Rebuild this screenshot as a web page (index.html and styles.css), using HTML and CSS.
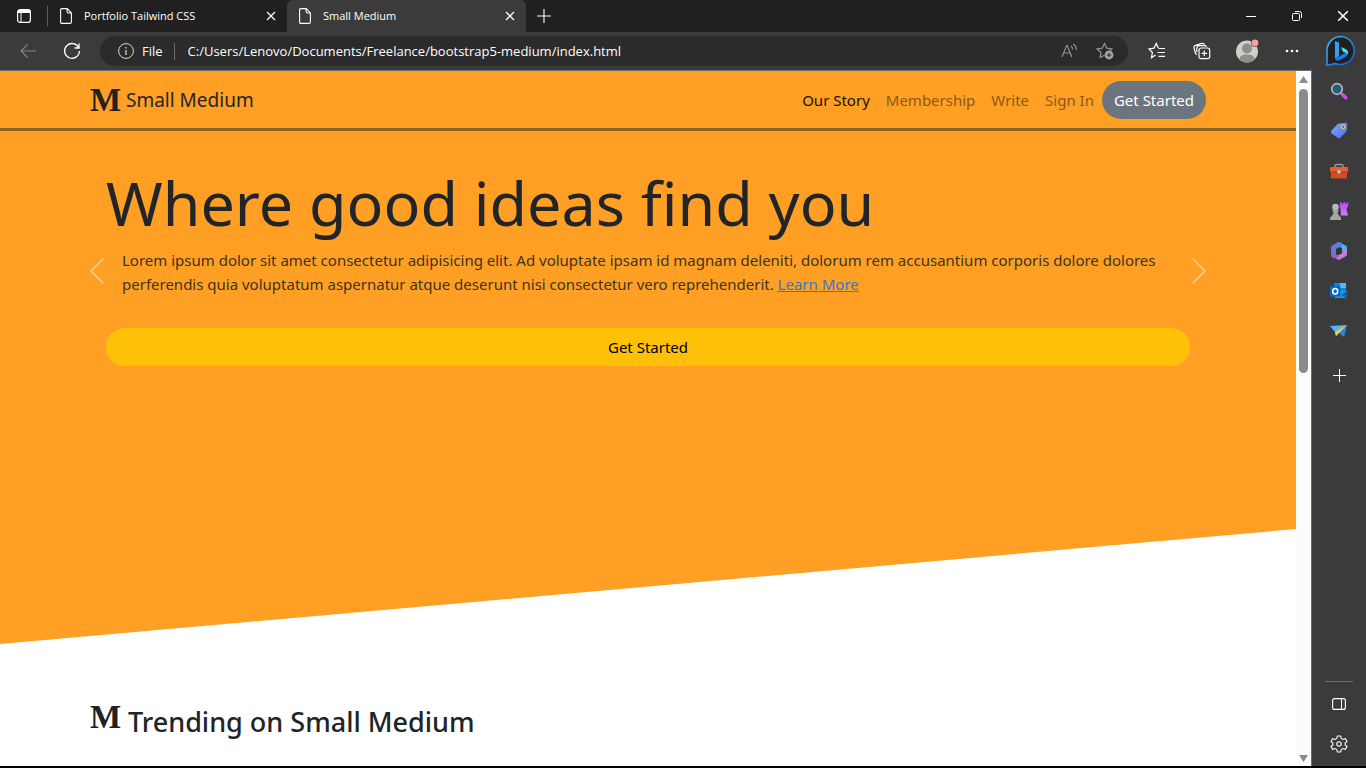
FILE: index.html
```html
<!DOCTYPE html>
<html lang="en">
<head>
<meta charset="utf-8">
<title>Small Medium</title>
<link rel="stylesheet" href="styles.css">
</head>
<body>
<svg class="defs" aria-hidden="true">
  <defs>
    <linearGradient id="bing-blue" x1="0" y1="0" x2="1" y2="1"><stop offset="0" stop-color="#2fc6f5"/><stop offset="1" stop-color="#1b4fd0"/></linearGradient>
    <linearGradient id="tag-blue" x1="0" y1="0" x2="1" y2="1"><stop offset="0" stop-color="#82aaff"/><stop offset="1" stop-color="#4a6cf0"/></linearGradient>
    <linearGradient id="rook" x1="0" y1="0" x2="0" y2="1"><stop offset="0" stop-color="#b04bf5"/><stop offset="1" stop-color="#d77df2"/></linearGradient>
    <symbol id="page" viewBox="0 0 12 16"><path d="M2 .6h5.200l4.200 4.300v9.100q0 1.400-1.400 1.400H2Q.6 15.400.6 14V2Q.6.6 2 .6M7.100.8v3q0 1.200 1.200 1.200h3" fill="none" stroke="currentColor" stroke-width="1.1"/></symbol>
    <symbol id="cross" viewBox="0 0 10 10"><path d="M1 1l8 8M9 1l-8 8" fill="none" stroke="currentColor" stroke-width="1.3"/></symbol>
    <symbol id="plus" viewBox="0 0 14 14"><path d="M7 0v14M0 7h14" fill="none" stroke="currentColor" stroke-width="1.1"/></symbol>
  </defs>
</svg>
<div class="browser">
  <header class="tabbar">
    <button class="tabmenu" aria-label="Tab actions"><svg width="14" height="14" viewBox="0 0 14 14"><rect x=".6" y=".6" width="12.800" height="12.800" rx="2.500" fill="none" stroke="#fff" stroke-width="1.200"/><path d="M1 1h12v3H1z" fill="#fff"/><path d="M4 4v9" stroke="#fff"/></svg></button>
    <div class="divider"></div>
    <div class="tab">
      <svg class="page-icon"><use href="#page"/></svg><span class="tab-title">Portfolio Tailwind CSS</span>
      <button class="tab-close" aria-label="Close tab"><svg width="10" height="10"><use href="#cross"/></svg></button>
    </div>
    <div class="tab tab-active">
      <svg class="page-icon"><use href="#page"/></svg><span class="tab-title">Small Medium</span>
      <button class="tab-close" aria-label="Close tab"><svg width="10" height="10"><use href="#cross"/></svg></button>
    </div>
    <button class="newtab" aria-label="New tab"><svg width="14" height="14"><use href="#plus"/></svg></button>
    <div class="window-controls">
      <button aria-label="Minimize"><svg width="10" height="10"><path d="M0 5.500h10" stroke="#fff"/></svg></button>
      <button aria-label="Restore"><svg width="10" height="10" viewBox="0 0 10 10" fill="none" stroke="#fff"><rect x=".5" y="2.500" width="7" height="7" rx="1"/><path d="M3 .5h4.500q2 0 2 2V7"/></svg></button>
      <button aria-label="Close"><svg width="12" height="12"><use href="#cross"/></svg></button>
    </div>
  </header>

  <div class="toolbar">
    <button class="tool back" aria-label="Back"><svg width="17" height="14" fill="none" stroke="#858585" stroke-width="1.100"><path d="M16 7H1M7.500.5L1 7l6.500 6.500"/></svg></button>
    <button class="tool reload" aria-label="Reload"><svg width="18" height="18" viewBox="0 0 18 18" fill="none" stroke="#fff" stroke-width="1.300"><path d="M15.800 6A7.400 7.400 0 1 0 16.400 9M16 1.500V6h-4.500"/></svg></button>
    <div class="address">
      <svg width="16" height="16" viewBox="0 0 16 16" fill="none" stroke="#d5d5d5"><circle cx="8" cy="8" r="7.400"/><path d="M8 7v5M8 4v1.500" stroke-width="1.300"/></svg>
      <label class="scheme" for="url">File</label>
      <input id="url" type="text" value="C:/Users/Lenovo/Documents/Freelance/bootstrap5-medium/index.html">
      <button class="addr-tool" aria-label="Read aloud"><svg width="17" height="16" viewBox="0 0 17 16" fill="none" stroke="#969696" stroke-width="1.100"><path d="M1 14L5.600 2.500h.6L10.800 14M2.600 10h6.600M10 3q1.600 1.300 1.600 3.500M12.300 1q3 2.200 3 6"/></svg></button>
      <button class="addr-tool" aria-label="Add to favorites"><svg width="18" height="18" viewBox="0 0 18 18"><path d="M8.500 13.200l-4.300 2.300.8-5L1.200 7l5-.8L8.500 1.500l2.300 4.700 5 .8-1.400 1.500" fill="none" stroke="#969696" stroke-width="1.200"/><circle cx="13" cy="13" r="4.400" fill="#a8a8a8"/><path d="M13 10.700v4.600M10.700 13h4.600" stroke="#2b2b2b" stroke-width="1.200"/></svg></button>
    </div>
    <button class="tool" aria-label="Favorites"><svg width="18" height="18" viewBox="0 0 18 18" fill="none" stroke="#fff" stroke-width="1.200"><path d="M7.500 13l-4 2.800.9-5.300L1 7l5-.8L8.200 1.500l2.200 4.600M10.500 6.500h6.500M9.500 10.500H17M10.500 14.300H17"/></svg></button>
    <button class="tool" aria-label="Collections"><svg width="18" height="18" viewBox="0 0 18 18" fill="none" stroke="#fff" stroke-width="1.200"><rect x="6" y="6" width="10.700" height="10.700" rx="2.200"/><path d="M11.300 8.500v5.700M8.500 11.300h5.700M4 12.500q-1.400-.4-1.800-2L1 5.600q-.3-1.800 1.400-2.300L9 1.400q2-.4 2.500 1.300M3.800 10V6.300q0-2.600 2.600-2.600h5.300q1.400 0 2 .8"/></svg></button>
    <button class="tool" aria-label="Profile"><svg width="24" height="24" viewBox="0 0 24 24"><circle cx="12" cy="12.500" r="11" fill="#d1cec9"/><circle cx="12" cy="9.500" r="5" fill="#918e89"/><path d="M4.500 20q0-4.500 7.500-4.500t7.500 4.500q-3 3.500-7.500 3.500T4.500 20" fill="#918e89"/><circle cx="20" cy="4" r="4" fill="#3b3b3b"/><circle cx="20" cy="4" r="3.400" fill="#ff9c9c"/></svg></button>
    <button class="tool" aria-label="More"><svg width="14" height="4" fill="#fff"><circle cx="2" cy="2" r="1.300"/><circle cx="7" cy="2" r="1.300"/><circle cx="12" cy="2" r="1.300"/></svg></button>
    <button class="tool bing" aria-label="Bing"><svg width="32" height="32" viewBox="0 0 32 32"><path d="M16.500 1.500a14 14 0 1 1-5.500 27q-3 1.500-8.500 1.500 1-3 .5-8v-7A14 14 0 0 1 16.500 1.500z" fill="#202020" stroke="url(#bing-blue)" stroke-width="1.600"/><path d="M11 6l4 1.500v13.300l-4 3.200z" fill="#2fa0f5"/><path d="M11 23.500l3-1.500 6-3.600 4-1.400q.5 3-2.500 5L15 25.500q-3 1-4-2z" fill="#2474ec"/><path d="M17 12l5 2.300q2.500 1.500 2 5-1.500-1.500-5-2.500z" fill="#42e3ee"/></svg></button>
  </div>

  <div class="workspace">
    <main class="viewport">
      <nav class="site-nav">
        <div class="container nav-row">
          <a class="brand" href="#"><span class="logo">M</span>Small Medium</a>
          <div class="nav-links">
            <a class="nav-link current" href="#">Our Story</a>
            <a class="nav-link" href="#">Membership</a>
            <a class="nav-link" href="#">Write</a>
            <a class="nav-link" href="#">Sign In</a>
            <button class="pill pill-gray">Get Started</button>
          </div>
        </div>
      </nav>
      <section class="hero">
        <div class="container slide">
          <button class="arrow" aria-label="Previous"><svg width="16" height="28" fill="none" stroke="#ffce8f" stroke-width="1.700" stroke-linecap="round"><path d="M13 2L1 14l12 12"/></svg></button>
          <div class="slide-body">
            <h1>Where good ideas find you</h1>
            <p>Lorem ipsum dolor sit amet consectetur adipisicing elit. Ad voluptate ipsam id magnam deleniti, dolorum rem accusantium corporis dolore dolores perferendis quia voluptatum aspernatur atque deserunt nisi consectetur vero reprehenderit. <a href="#">Learn More</a></p>
            <button class="pill pill-yellow">Get Started</button>
          </div>
          <button class="arrow" aria-label="Next"><svg width="16" height="28" fill="none" stroke="#ffce8f" stroke-width="1.700" stroke-linecap="round"><path d="M3 2l12 12L3 26"/></svg></button>
        </div>
      </section>
      <section class="container trending">
        <span class="logo">M</span><h2>Trending on Small Medium</h2>
      </section>
    </main>
    <div class="scrollbar" aria-hidden="true">
      <svg width="9" height="7" fill="#8b8b8b"><path d="M4.500 0L9 7H0z"/></svg>
      <div class="track"><div class="thumb"></div></div>
      <svg width="9" height="7" fill="#8b8b8b"><path d="M4.500 7L9 0H0z"/></svg>
    </div>
    <aside class="sidebar">
      <button aria-label="Search"><svg width="18" height="18" viewBox="0 0 18 18"><path d="M10.500 10.500l2 2" stroke="#aaa" stroke-width="2"/><path d="M12.500 12.500l3.300 3.300" stroke="#cc4cf5" stroke-width="3.400" stroke-linecap="round"/><circle cx="7" cy="7" r="5.300" fill="#235d7c" stroke="#b5b5b5" stroke-width="1.700"/></svg></button>
      <button aria-label="Shopping"><svg width="18" height="18" viewBox="0 0 18 18"><path d="M9 1.500l6.500-.7q1.500 0 1.500 1.400V8q0 1-.8 1.800l-6 6q-1.300 1.200-2.500 0L1.600 11.500Q.4 10 1.400 8.800L7 2.700q.8-1 2-1.200z" fill="url(#tag-blue)"/><circle cx="13" cy="4.800" r="1.700" fill="#455" stroke="#f5d21f" stroke-width="1.300"/></svg></button>
      <button aria-label="Tools"><svg width="20" height="16" viewBox="0 0 20 16"><path d="M6 5V3q0-1.500 1.500-1.500h5Q14 1.500 14 3v2" fill="none" stroke="#999" stroke-width="1.500"/><rect x="1" y="4" width="18" height="6" rx="1" fill="#ed5b33"/><path d="M2 9h16v5.500q0 1-1 1H3q-1 0-1-1z" fill="#d94a24"/><path d="M1 9h18" stroke="#a8341a"/><circle cx="10" cy="8.800" r="1.800" fill="#c8c8c8"/></svg></button>
      <button aria-label="Games"><svg width="20" height="20" viewBox="0 0 20 20"><path d="M11 1.500h2v1.200h1.200V1.300h2v1.400h1.200V1.500h2L18.700 6l-1.200 1 .8 5.500q1 .8.700 2h-7L11.500 7 10.700 6z" fill="url(#rook)"/><circle cx="6.500" cy="6" r="3.300" fill="#b8b8b8"/><path d="M3.500 9h6v1.600L8.500 11q0 2.500 2 4l1.500 1.700v2.300H1v-2.300L2.700 15q2-1.500 1.800-4l-1-.4z" fill="#a5a5a5"/></svg></button>
      <button aria-label="Microsoft 365"><svg width="18" height="20" viewBox="0 0 18 20"><path d="M9 1l7 3.700q1 .7 1 2V12l-5-2.500V7L6 4z" fill="#45b4ef"/><path d="M17 8v5q0 1.500-1.300 2.200L10 18.500q-1.200.6-2.400 0L4 16l8-3.500V9.800z" fill="#bb83d3"/><path d="M9.500 1q1.500 0 2.500 1v3L6 8v5.500L8 15l-4 2.500-2-1.500q-1-.7-1-2V6.500q0-1.200 1-2L7.500 1.200z" fill="#627bd3"/><path d="M1 11q2 3.500 5 2.500l3 2-4 2-3-1.500q-1-1-1-2z" fill="#9b5bbb"/><path d="M9 6.500l3 1.700v3.600l-3 1.700-3-1.700V8.200z" fill="#343434"/></svg></button>
      <button aria-label="Outlook"><svg width="18" height="18" viewBox="0 0 18 18"><path d="M4 1h12v9H4z" fill="#1681d1"/><path d="M10 1h6v5h-6z" fill="#45c4f1"/><path d="M5 8l12 1v7H5z" fill="#1a9de4"/><path d="M17 9l-6 4 6 3.500z" fill="#0b64aa"/><rect x="0" y="4" width="10.500" height="10.500" rx="1" fill="#0969bd"/><ellipse cx="5.200" cy="9.200" rx="2.500" ry="2.800" fill="none" stroke="#fff" stroke-width="1.500"/></svg></button>
      <button aria-label="Drop"><svg width="18" height="16" viewBox="0 0 18 16"><path d="M0 3l17-1L5 9z" fill="#4eb8f4"/><path d="M17 2L5 9l1 4z" fill="#f9b51f"/><path d="M17 2L9 10l5 4z" fill="#2785ed"/><path d="M5 9l12-7L9 10l-3 3z" fill="#ffc93c"/></svg></button>
      <button class="add" aria-label="Customize"><svg width="13" height="13"><use href="#plus"/></svg></button>
      <div class="sidebar-end">
        <button aria-label="Hide sidebar"><svg width="14" height="12" fill="none" stroke="#fff" stroke-width="1.100"><rect x=".6" y=".6" width="12.800" height="10.800" rx="2"/><path d="M9.500 1v10"/></svg></button>
        <button aria-label="Settings"><svg width="18" height="18" viewBox="0 0 18 18" fill="none" stroke="#fff" stroke-width="1.100" stroke-linejoin="round"><path d="M7.300 1h3.400l.5 2.400 1.700 1 2.400-.8L17 6.600l-1.900 1.600v1.700l1.900 1.600-1.700 2.900-2.400-.8-1.700 1-.5 2.400H7.300l-.5-2.400-1.700-1-2.400.8L1 11.500l1.900-1.600V8.200L1 6.600l1.700-3 2.400.8 1.700-1z"/><circle cx="9" cy="9" r="2.200"/></svg></button>
      </div>
    </aside>
  </div>
</div>
</body>
</html>
```

FILE: styles.css
```css
* { box-sizing: border-box; }
body { margin: 0; font-family: "Noto Sans", "Open Sans", sans-serif; font-size: 15px; line-height: 24px; color: #212529; }
button { display: flex; align-items: center; justify-content: center; padding: 0; border: 0; background: none; color: #fff; font: inherit; }
a { color: inherit; text-decoration: none; }
svg { flex: none; display: block; }
h1, h2, p { margin: 0; }
.defs { position: absolute; width: 0; height: 0; }

.browser { display: flex; flex-direction: column; height: 100vh; background: #3b3b3b; border-bottom: 2px solid #000; }

.tabbar { display: flex; height: 32px; background: #202020; color: #fff; font-family: "Open Sans", sans-serif; font-size: 11px; }
.tabmenu { width: 47px; }
.divider { width: 1px; height: 20px; margin-top: 6px; background: #5c5c5c; }
.tab { display: flex; align-items: center; width: 239px; padding: 0 10px 0 12px; }
.tab-active { background: #3b3b3b; border-radius: 6px 6px 0 0; }
.page-icon { width: 12px; height: 16px; }
.tab-title { flex: 1; margin-left: 12px; }
.tab-close { width: 12px; height: 20px; }
.newtab { width: 36px; }
.window-controls { display: flex; margin-left: auto; }
.window-controls button { width: 46px; }

.toolbar { display: flex; align-items: center; height: 38px; color: #fff; font-family: "Open Sans", sans-serif; font-size: 13px; }
.tool { width: 45px; height: 30px; }
.back { width: 50px; padding-left: 6px; }
.reload { width: 50px; padding-right: 6px; }
.address { display: flex; flex: 1; align-items: center; height: 30px; margin-right: 6px; padding: 0 5px 0 18px; border-radius: 15px; background: #2b2b2b; }
.scheme { margin: 0 11px 0 8px; }
.address input { flex: 1; min-width: 0; height: 17px; padding: 0 0 0 13px; border: 0; border-left: 1px solid #6b6b6b; background: none; color: #fff; font: inherit; outline: 0; }
.addr-tool { width: 36px; height: 30px; }
.bing { width: 52px; }

.workspace { display: flex; flex: 1; min-height: 0; }
.viewport { flex: 1; min-width: 0; overflow: hidden; border-top: 1px solid #6b6b6b; background: #fff; }
.container { width: 100%; max-width: 1140px; margin: 0 auto; padding: 0 12px; }

.site-nav { padding: 10px 0 9px; border-bottom: 3px solid #8f6226; background: #ffa025; }
.nav-row, .nav-links, .brand { display: flex; align-items: center; }
.nav-row { justify-content: space-between; }
.brand { font-size: 19px; gap: 6px; }
.logo { width: 30px; font: bold 33px/30px "Liberation Serif", serif; color: #222; }
.nav-link { padding: 7px 8px; color: #8c5814; }
.current { color: #1a1003; }
.pill { height: 38px; padding: 0 12px; border-radius: 19px; }
.pill-gray { background: #6c757d; }
.pill-yellow { width: 100%; background: #ffc107; color: #000; }

.hero { height: 513px; padding-top: 32px; background: #ffa025; clip-path: polygon(0 0, 100% 0, 100% 398px, 0 100%); }
.slide { display: flex; align-items: center; }
.arrow { width: 16px; height: 28px; margin-top: 13px; }
.slide-body { flex: 1; }
.slide-body h1 { font-size: 61px; line-height: 80px; font-weight: 400; }
.slide-body p { padding: 5px 16px 0; margin-bottom: 32px; color: #40331f; }
.slide-body p a { color: #2f78d8; text-decoration: underline; }

.trending { display: flex; padding-top: 58px; gap: 8px; }
.trending h2 { font-size: 27px; line-height: 40px; font-weight: 500; }

.scrollbar { display: flex; flex-direction: column; align-items: center; width: 16px; padding: 5px 0 4px; border: solid #6b6b6b; border-width: 1px 1px 0 0; background: #fcfcfc; }
.track { flex: 1; padding: 6px 0; }
.thumb { width: 9px; height: 43%; border-radius: 5px; background: #8b8b8b; }

.sidebar { display: flex; flex-direction: column; align-items: center; width: 54px; padding-top: 1px; }
.sidebar button { width: 40px; height: 40px; }
.sidebar .add { margin-top: 4px; }
.sidebar-end { display: flex; flex-direction: column; align-items: center; width: 28px; margin-top: auto; padding: 2px 0; border-top: 1px solid #6b6b6b; }
```
